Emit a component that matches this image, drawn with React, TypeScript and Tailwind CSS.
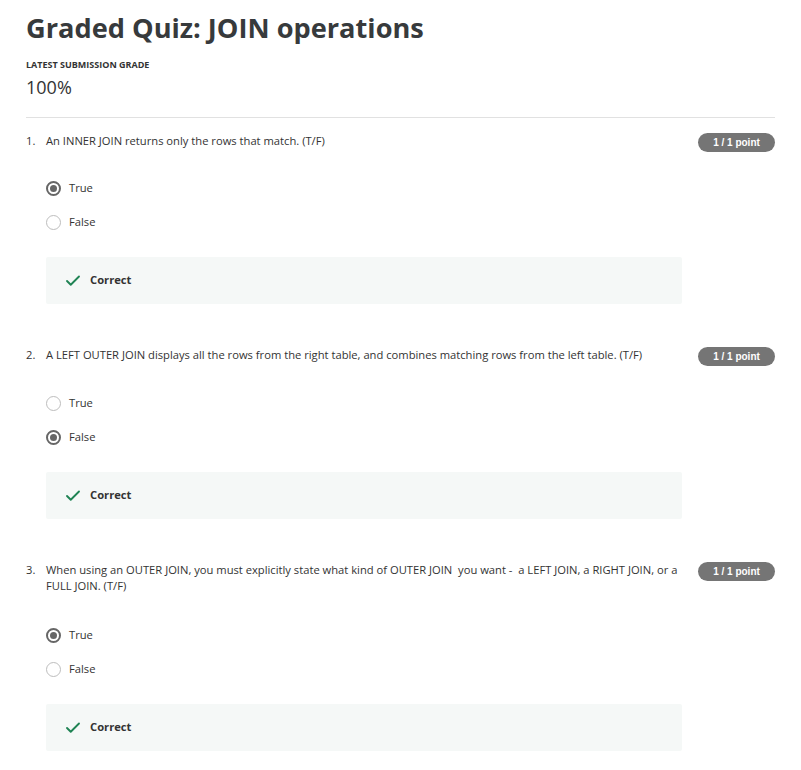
import { Check } from "lucide-react"

type Question = {
  num: number
  text: string
  options: string[]
  selected: number
  optionsGap: string
}

const questions: Question[] = [
  {
    num: 1,
    text: "An INNER JOIN returns only the rows that match. (T/F)",
    options: ["True", "False"],
    selected: 0,
    optionsGap: "mt-[28px]",
  },
  {
    num: 2,
    text: "A LEFT OUTER JOIN displays all the rows from the right table, and combines matching rows from the left table. (T/F)",
    options: ["True", "False"],
    selected: 1,
    optionsGap: "mt-[29px]",
  },
  {
    num: 3,
    text: "When using an OUTER JOIN, you must explicitly state what kind of OUTER JOIN\u00a0 you want -\u00a0 a LEFT JOIN, a RIGHT JOIN, or a FULL JOIN. (T/F)",
    options: ["True", "False"],
    selected: 0,
    optionsGap: "mt-[33px]",
  },
]

function Radio({ checked }: { checked: boolean }) {
  if (checked) {
    return (
      <span className="flex h-[15px] w-[15px] items-center justify-center rounded-full border-2 border-[#666]">
        <span className="h-[7px] w-[7px] rounded-full bg-[#666]" />
      </span>
    )
  }
  return <span className="h-[15px] w-[15px] rounded-full border border-[#bdbdbd]" />
}

function QuestionBlock({ q }: { q: Question }) {
  return (
    <div className="mb-[43px]">
      <div className="flex items-start justify-between">
        <div className="flex text-[11.2px] leading-4 text-[#333]">
          <span className="w-5 shrink-0">{q.num}.</span>
          <p className="w-[640px]">{q.text}</p>
        </div>
        <span className="flex h-[19px] w-[77px] items-center justify-center rounded-full bg-[#757575] text-[10px] font-bold text-white" style={{ fontFamily: "'Liberation Sans', Arial, sans-serif" }}>
          1 / 1 point
        </span>
      </div>
      <div className={`${q.optionsGap} flex flex-col gap-[18px] pl-5`}>
        {q.options.map((o, i) => (
          <label key={o} className="flex items-center gap-[8px] text-[11.2px] leading-4 text-[#333]">
            <Radio checked={i === q.selected} />
            <span>{o}</span>
          </label>
        ))}
      </div>
      <div className="ml-5 mt-[27px] flex h-[47px] w-[636px] items-center gap-[8px] rounded-[2px] bg-[#f5f8f7] pl-[18px]">
        <Check size={18} strokeWidth={2.5} className="text-[#1f8354]" />
        <span className="text-[11.2px] font-bold text-[#333]">Correct</span>
      </div>
    </div>
  )
}

export default function App() {
  return (
    <div className="min-h-screen bg-white px-[26px] pt-[9px]" style={{ fontFamily: "'Open Sans', 'Noto Sans', sans-serif" }}>
      <h1 className="text-[27.2px] font-bold leading-[38px] text-[#373a3c]">Graded Quiz: JOIN operations</h1>
      <div className="mt-[12px] text-[9px] font-bold leading-3 text-[#333]">LATEST SUBMISSION GRADE</div>
      <div className="mt-[4px] text-[18px] leading-6 text-[#333]">100%</div>
      <div className="mt-[18px] h-px bg-[#e1e1e1]" />
      <div className="pt-[15px]">
        {questions.map((q) => (
          <QuestionBlock key={q.num} q={q} />
        ))}
      </div>
    </div>
  )
}
